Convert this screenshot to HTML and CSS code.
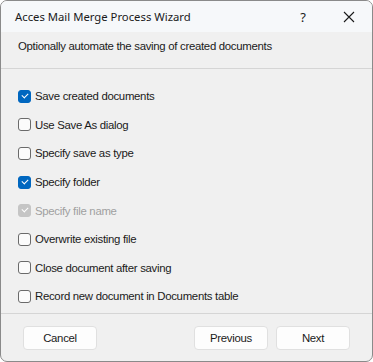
FILE: index.html
```html
<!DOCTYPE html>
<html lang="en">

<head>
    <meta charset="UTF-8">
    <title>Acces Mail Merge Process Wizard</title>
    <link rel="stylesheet" href="styles.css">
</head>

<body>
    <div class="window">
        <div class="titlebar">
            <span class="title">Acces Mail Merge Process Wizard</span>
            <span class="title-btn help">?</span>
            <span class="title-btn close">
                <svg width="12" height="12" viewBox="0 0 12 12">
                    <path d="M1 1 L11 11 M11 1 L1 11" stroke="#1a1a1a" stroke-width="1.1" fill="none"/>
                </svg>
            </span>
        </div>

        <div class="intro">Optionally automate the saving of created documents</div>

        <div class="options">
            <label class="option"><span class="box checked"></span>Save created documents</label>
            <label class="option"><span class="box"></span>Use Save As dialog</label>
            <label class="option"><span class="box"></span>Specify save as type</label>
            <label class="option"><span class="box checked"></span>Specify folder</label>
            <label class="option disabled"><span class="box checked"></span>Specify file name</label>
            <label class="option"><span class="box"></span>Overwrite existing file</label>
            <label class="option"><span class="box"></span>Close document after saving</label>
            <label class="option"><span class="box"></span>Record new document in Documents table</label>
        </div>

        <div class="footer">
            <button class="btn">Cancel</button>
            <div class="spacer"></div>
            <button class="btn">Previous</button>
            <button class="btn">Next</button>
        </div>
    </div>
</body>

</html>
```

FILE: styles.css
```css
html,
body {
    margin: 0;
    padding: 0;
    background: #ffffff;
}

body {
    font-family: 'Liberation Sans', Arial, sans-serif;
    font-size: 11.4px;
    letter-spacing: -0.3px;
    color: #1a1a1a;
}

.window {
    width: 371px;
    height: 360px;
    border: 1px solid #8a8a8a;
    border-radius: 7px;
    background: #f0f0f0;
    overflow: hidden;
    display: flex;
    flex-direction: column;
}

.titlebar {
    height: 31px;
    display: flex;
    align-items: center;
    background: #f6f8fa;
    padding-left: 14px;
}

.title {
    flex: 1;
    font-family: 'Noto Sans', sans-serif;
    font-size: 11.3px;
    letter-spacing: 0;
}

.title-btn {
    width: 46px;
    text-align: center;
    font-family: 'Noto Sans', sans-serif;
    font-size: 13px;
    letter-spacing: 0;
}

.close svg {
    display: block;
    margin: 0 auto;
}

.intro {
    height: 36px;
    line-height: 28px;
    padding-left: 17px;
    border-bottom: 1px solid #d5d5d5;
}

.options {
    flex: 1;
    padding: 13px 0 0 17px;
    display: flex;
    flex-direction: column;
}

.option {
    height: 28.6px;
    display: flex;
    align-items: center;
    gap: 4px;
}

.option.disabled {
    color: #a0a0a0;
}

.box {
    width: 11px;
    height: 11px;
    border: 1px solid #6a6a6a;
    border-radius: 3px;
    background: #fbfbfb;
    position: relative;
}

.box.checked {
    background: #0067c0;
    border-color: #0067c0;
}

.box.checked::after {
    content: "";
    position: absolute;
    left: 3px;
    top: 2px;
    width: 5px;
    height: 3px;
    border-left: 1px solid #ffffff;
    border-bottom: 1px solid #ffffff;
    transform: rotate(-45deg);
}

.disabled .box.checked {
    background: #c5c5c5;
    border-color: #c5c5c5;
}

.footer {
    height: 47px;
    border-top: 1px solid #d5d5d5;
    display: flex;
    align-items: center;
    padding: 0 22px;
    gap: 8px;
}

.spacer {
    flex: 1;
}

.btn {
    width: 74px;
    height: 24px;
    border: 1px solid #e0e0e0;
    border-radius: 4px;
    background: #fdfdfd;
    font-family: 'Liberation Sans', Arial, sans-serif;
    font-size: 11.4px;
    letter-spacing: -0.3px;
    color: #1a1a1a;
    padding: 0;
}
```
